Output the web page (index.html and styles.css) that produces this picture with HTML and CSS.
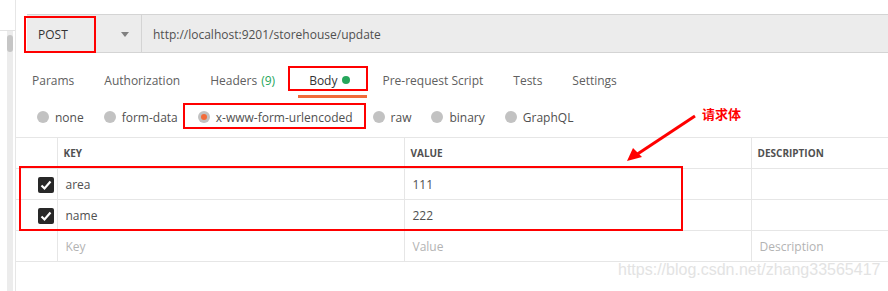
FILE: index.html
```html
<!DOCTYPE html>
<html lang="en">
  <head>
    <meta charset="UTF-8" />
    <meta name="viewport" content="width=device-width, initial-scale=1.0" />
    <title>Postman - Body</title>
    <link rel="stylesheet" href="styles.css">
  </head>
  <body>
    <div class="app">
      <aside class="sidebar">
        <div class="scroll-track"><div class="scroll-thumb"></div></div>
      </aside>

      <main class="main">
        <div class="url-bar">
          <div class="method">
            <span>POST</span>
            <span class="caret"></span>
          </div>
          <div class="url">http://localhost:9201/storehouse/update</div>
        </div>

        <nav class="tabs">
          <span class="tab">Params</span>
          <span class="tab">Authorization</span>
          <span class="tab">Headers <span class="count">(9)</span></span>
          <span class="tab active">Body <span class="dot"></span></span>
          <span class="tab">Pre-request Script</span>
          <span class="tab">Tests</span>
          <span class="tab">Settings</span>
        </nav>

        <div class="body-types">
          <label class="radio"><span class="circle"></span>none</label>
          <label class="radio"><span class="circle"></span>form-data</label>
          <label class="radio checked"><span class="circle"></span>x-www-form-urlencoded</label>
          <label class="radio"><span class="circle"></span>raw</label>
          <label class="radio"><span class="circle"></span>binary</label>
          <label class="radio"><span class="circle"></span>GraphQL</label>
        </div>

        <table class="params">
          <thead>
            <tr>
              <th class="col-check"></th>
              <th class="col-key">KEY</th>
              <th class="col-value">VALUE</th>
              <th>DESCRIPTION</th>
            </tr>
          </thead>
          <tbody>
            <tr>
              <td class="col-check">
                <span class="checkbox"><svg width="16" height="16" viewBox="0 0 16 16"><polyline points="3.5,8.5 6.5,11.5 12.5,4.5" fill="none" stroke="#fff" stroke-width="2.2" /></svg></span>
              </td>
              <td>area</td>
              <td>111</td>
              <td></td>
            </tr>
            <tr>
              <td class="col-check">
                <span class="checkbox"><svg width="16" height="16" viewBox="0 0 16 16"><polyline points="3.5,8.5 6.5,11.5 12.5,4.5" fill="none" stroke="#fff" stroke-width="2.2" /></svg></span>
              </td>
              <td>name</td>
              <td>222</td>
              <td></td>
            </tr>
            <tr class="placeholder">
              <td class="col-check"></td>
              <td>Key</td>
              <td>Value</td>
              <td>Description</td>
            </tr>
          </tbody>
        </table>
      </main>
    </div>

    <!-- annotations drawn over the screenshot -->
    <div class="mark mark-method"></div>
    <div class="mark mark-body"></div>
    <div class="mark mark-type"></div>
    <div class="mark mark-rows"></div>
    <div class="note">请求体</div>
    <svg class="arrow" width="888" height="291" viewBox="0 0 888 291">
      <line x1="695" y1="116" x2="636" y2="155" stroke="#ff0000" stroke-width="3" />
      <polygon points="627,161 633,148 642,157" fill="#ff0000" />
    </svg>
    <div class="watermark">https://blog.csdn.net/zhang33565417</div>
  </body>
</html>
```

FILE: styles.css
```css
body {
  margin: 0;
  font-family: "Open Sans", "Noto Sans", sans-serif;
  font-size: 12px;
  color: #505050;
  background-color: #fff;
  overflow: hidden;
}

.app {
  display: flex;
  height: 291px;
}

.sidebar {
  width: 16px;
  flex-shrink: 0;
  border-right: 1px solid #e6e6e6;
  box-sizing: border-box;
}

.sidebar::before {
  content: "";
  display: block;
  height: 30px;
  border-bottom: 1px solid #e3e3e3;
}

.scroll-track {
  margin-left: 7px;
  width: 6px;
  height: 260px;
  background-color: #ececec;
  padding-top: 4px;
}

.scroll-thumb {
  width: 6px;
  height: 17px;
  border-radius: 3px;
  background-color: #c6c6c6;
}

.main {
  flex: 1;
  min-width: 0;
  padding-top: 14px;
}

.url-bar {
  display: flex;
  margin-left: 11px;
  height: 39px;
  box-sizing: border-box;
  background-color: #ececec;
  border-top: 1px solid #d4d4d4;
  border-bottom: 1px solid #d4d4d4;
}

.method {
  width: 115px;
  box-sizing: border-box;
  display: flex;
  align-items: center;
  justify-content: space-between;
  padding: 1px 12px 0 11px;
  border-right: 1px solid #d4d4d4;
  color: #333;
}

.caret {
  width: 0;
  height: 0;
  border-left: 4px solid transparent;
  border-right: 4px solid transparent;
  border-top: 5px solid #808080;
}

.url {
  display: flex;
  align-items: center;
  padding: 1px 0 0 11px;
}

.tabs {
  display: flex;
  height: 24px;
  margin-top: 15px;
  padding-left: 1px;
  align-items: center;
}

.tab {
  padding: 0 15px;
  color: #606060;
  display: flex;
  align-items: center;
  height: 24px;
  white-space: nowrap;
  position: relative;
}

.tab .count {
  color: #26a65b;
  margin-left: 4px;
}

.tab.active {
  color: #333;
  padding: 0 17px 0 19px;
}

.tab.active::after {
  content: "";
  position: absolute;
  left: 8px;
  right: 0;
  bottom: -6px;
  height: 3px;
  background-color: #f26b3a;
}

.dot {
  width: 8px;
  height: 8px;
  margin-left: 5px;
  border-radius: 50%;
  background-color: #26a65b;
}

.body-types {
  display: flex;
  gap: 20px;
  height: 24px;
  margin-top: 13px;
  padding-left: 21px;
  align-items: center;
}

.radio {
  display: flex;
  align-items: center;
  gap: 6px;
  color: #505050;
}

.circle {
  width: 12px;
  height: 12px;
  border-radius: 50%;
  background-color: #c2c2c2;
  display: flex;
  align-items: center;
  justify-content: center;
}

.radio.checked .circle::after {
  content: "";
  width: 6px;
  height: 6px;
  border-radius: 50%;
  background-color: #f26b3a;
}

.params {
  margin-top: 8px;
  width: calc(100% + 40px);
  border-collapse: collapse;
  table-layout: fixed;
}

.params th,
.params td {
  height: 30px;
  padding: 0 0 0 8px;
  border: 1px solid #e6e6e6;
  text-align: left;
  color: #505050;
  white-space: nowrap;
  overflow: hidden;
}

.params th {
  font-size: 10px;
  font-weight: 700;
  padding-left: 6px;
}

.params tr > :first-child {
  border-left: none;
}

.params .col-check {
  width: 41px;
  padding: 0 3px 0 0;
  text-align: right;
  box-sizing: border-box;
}

.params .col-key {
  width: 347px;
  box-sizing: border-box;
}

.params .col-value {
  width: 347px;
  box-sizing: border-box;
}

.checkbox {
  display: inline-block;
  width: 16px;
  height: 16px;
  border-radius: 2px;
  background-color: #282828;
  vertical-align: middle;
}

.checkbox svg {
  display: block;
}

.params .placeholder td {
  color: #b3b3b3;
}

.mark {
  position: absolute;
  border: 2px solid #ff0000;
  box-sizing: border-box;
}

.mark-method {
  left: 24px;
  top: 16px;
  width: 72px;
  height: 37px;
}

.mark-body {
  left: 288px;
  top: 66px;
  width: 80px;
  height: 25px;
}

.mark-type {
  left: 183px;
  top: 103px;
  width: 183px;
  height: 26px;
}

.mark-rows {
  left: 19px;
  top: 166px;
  width: 664px;
  height: 65px;
}

.note {
  position: absolute;
  left: 702px;
  top: 104px;
  color: #ff0000;
  font-weight: 700;
  font-size: 13px;
  font-family: "Noto Sans CJK SC", sans-serif;
}

.arrow {
  position: absolute;
  left: 0;
  top: 0;
  pointer-events: none;
}

.watermark {
  position: absolute;
  left: 618px;
  top: 261px;
  font-family: "Liberation Sans", Arial, sans-serif;
  font-size: 16px;
  color: #e3e3e3;
}
```
